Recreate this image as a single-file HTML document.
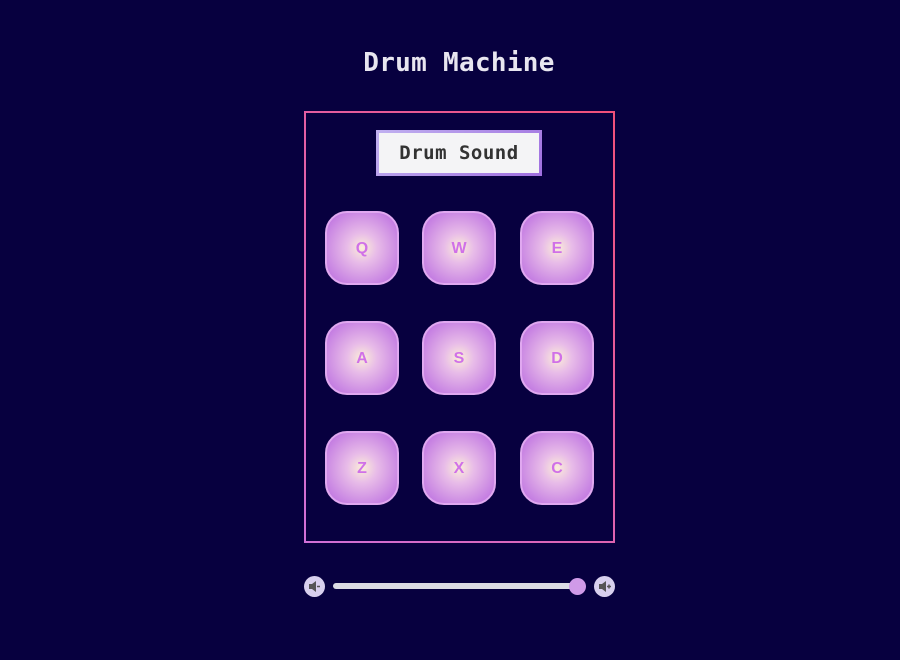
<!DOCTYPE html>
<html><head><style>
body{margin:0;width:900px;height:660px;background:#07003f;font-family:"Liberation Sans",sans-serif;position:relative;overflow:hidden}
h1{position:absolute;top:48px;left:0;width:918px;text-align:center;margin:0;font-size:26px;color:#e8e6f0;font-family:"DejaVu Sans Mono","Liberation Mono",monospace;font-weight:bold;letter-spacing:0.3px}
.box{position:absolute;left:304px;top:111px;width:311px;height:432px;box-sizing:border-box;border:2px solid;border-image:linear-gradient(45deg,#d070d8,#f0507a) 1}
.disp{position:absolute;left:376px;top:130px;width:166px;height:46px;box-sizing:border-box;background:#f4f4f6;border:3px solid;border-image:linear-gradient(135deg,#c0b0f0,#a070e0) 1;text-align:center;line-height:40px;font-size:19px;font-weight:bold;color:#333;font-family:"DejaVu Sans Mono",monospace;letter-spacing:0.5px}
.pad{position:absolute;width:74px;height:74px;box-sizing:border-box;border-radius:22px;border:2px solid #e0a8f0;background:radial-gradient(circle,#fbeed8 0%,#e8bce8 30%,#b868e0 100%);color:#d070e8;font-weight:bold;font-size:16px;text-align:center;line-height:72px}
.ic{position:absolute;width:21px;height:21px;border-radius:50%;background:#d8d0ee;top:576px}
.track{position:absolute;left:333px;top:583px;width:246px;height:6px;border-radius:3px;background:#dcdce4}
.thumb{position:absolute;left:569px;top:578px;width:17px;height:17px;border-radius:50%;background:#d09ae8}
</style></head><body>
<h1>Drum Machine</h1>
<div class="box"></div>
<div class="disp">Drum Sound</div>
<div class="pad" style="left:325px;top:211px">Q</div>
<div class="pad" style="left:422px;top:211px">W</div>
<div class="pad" style="left:520px;top:211px">E</div>
<div class="pad" style="left:325px;top:321px">A</div>
<div class="pad" style="left:422px;top:321px">S</div>
<div class="pad" style="left:520px;top:321px">D</div>
<div class="pad" style="left:325px;top:431px">Z</div>
<div class="pad" style="left:422px;top:431px">X</div>
<div class="pad" style="left:520px;top:431px">C</div>
<div class="ic" style="left:304px"><svg width="21" height="21"><path d="M5 8h3l4-3v11l-4-3H5z" fill="#555"/><path d="M13 10.5h3" stroke="#555" stroke-width="1.5"/></svg></div>
<div class="track"></div><div class="thumb"></div>
<div class="ic" style="left:594px"><svg width="21" height="21"><path d="M5 8h3l4-3v11l-4-3H5z" fill="#555"/><path d="M13 10.5h4M15 8.5v4" stroke="#555" stroke-width="1.5"/></svg></div>
</body></html>
